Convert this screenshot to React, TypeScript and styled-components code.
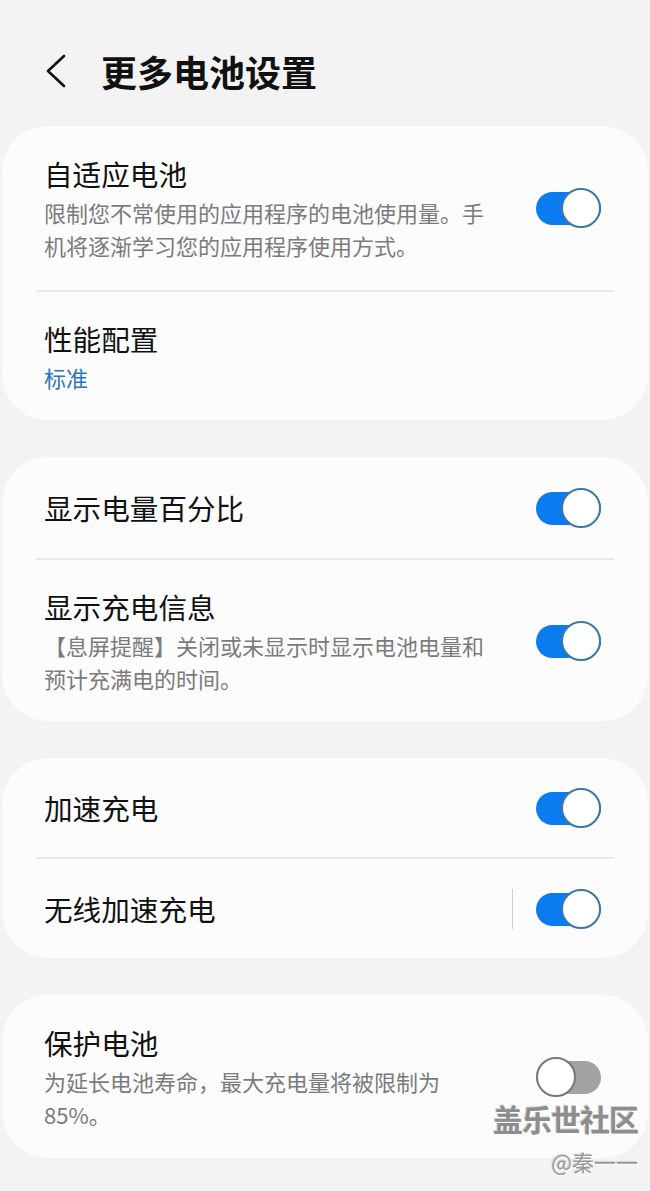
import React from 'react';
import styled, { createGlobalStyle } from 'styled-components';

const GlobalStyle = createGlobalStyle`
  html, body {
    margin: 0;
    padding: 0;
    background: #f3f3f3;
  }
  body {
    font-family: "Noto Sans CJK SC", "Noto Sans", "Liberation Sans", sans-serif;
  }
`;

const Page = styled.div`
  position: relative;
  width: 650px;
  min-height: 1191px;
  background: #f3f3f3;
  overflow: hidden;
`;

const Header = styled.div`
  display: flex;
  align-items: center;
  height: 111px;
  padding: 15px 0 0 42px;
  gap: 33px;
`;

const BackButton = styled.button`
  display: flex;
  align-items: center;
  justify-content: center;
  width: 26px;
  height: 40px;
  padding: 0;
  border: none;
  background: transparent;
`;

const Title = styled.h1`
  margin: 0;
  font-size: 36px;
  font-weight: 700;
  line-height: 48px;
  color: #111;
`;

const Card = styled.section`
  margin: 0 2px 37px 2px;
  background: #fcfcfc;
  border-radius: 46px;
`;

const Row = styled.div<{ $height: number }>`
  display: flex;
  align-items: center;
  min-height: ${p => p.$height}px;
  padding: 0 47px 0 42px;
  box-sizing: border-box;
`;

const Texts = styled.div`
  flex: 1;
  display: flex;
  flex-direction: column;
`;

const ItemTitle = styled.div`
  font-size: 28.6px;
  line-height: 40px;
  color: #111;
`;

const Sub = styled.div<{ $accent?: boolean }>`
  max-width: 452px;
  margin-top: 2px;
  font-size: 22px;
  line-height: 33px;
  color: ${p => (p.$accent ? '#2a78b5' : '#7b7b7b')};
`;

const Divider = styled.div`
  height: 2px;
  margin: 0 34px;
  background: #e9e9e9;
`;

const VSep = styled.div`
  flex: none;
  width: 1px;
  height: 40px;
  margin-right: 23px;
  background: #cfcfcf;
`;

const Toggle = styled.div<{ $on: boolean }>`
  position: relative;
  flex: none;
  width: 65px;
  height: 40px;

  &::before {
    content: '';
    position: absolute;
    left: 0;
    right: 0;
    top: 4px;
    height: 33px;
    border-radius: 17px;
    background: ${p => (p.$on ? '#0b7cf0' : '#a2a2a2')};
  }

  &::after {
    content: '';
    position: absolute;
    top: 0;
    ${p => (p.$on ? 'right: 0;' : 'left: 0;')}
    width: 36px;
    height: 36px;
    border-radius: 50%;
    background: #fff;
    border: 2px solid ${p => (p.$on ? '#3b78a6' : '#777')};
  }
`;

const Watermark = styled.div`
  position: absolute;
  right: 12px;
  bottom: 19px;
  display: flex;
  flex-direction: column;
  align-items: flex-end;
  color: #8d8d8d;
  text-shadow: 1px 1px 0 #fff, -1px -1px 0 #d0d0d0;
`;

const MarkBig = styled.div`
  font-size: 30px;
  font-weight: 700;
  line-height: 40px;
  letter-spacing: -1px;
`;

const MarkSmall = styled.div`
  font-size: 22px;
  line-height: 30px;
  margin-top: 8px;
  color: #999;
`;

function Chevron() {
  return (
    <svg width="24" height="36" viewBox="0 0 24 36" fill="none">
      <path d="M21 3 L5 18 L21 33" stroke="#111" strokeWidth="2.6" strokeLinecap="round" strokeLinejoin="round" />
    </svg>
  );
}

export default function App() {
  return (
    <Page>
      <GlobalStyle />
      <Header>
        <BackButton aria-label="返回">
          <Chevron />
        </BackButton>
        <Title>更多电池设置</Title>
      </Header>

      <Card>
        <Row $height={164}>
          <Texts>
            <ItemTitle>自适应电池</ItemTitle>
            <Sub>限制您不常使用的应用程序的电池使用量。手机将逐渐学习您的应用程序使用方式。</Sub>
          </Texts>
          <Toggle $on />
        </Row>
        <Divider />
        <Row $height={128}>
          <Texts>
            <ItemTitle>性能配置</ItemTitle>
            <Sub $accent>标准</Sub>
          </Texts>
        </Row>
      </Card>

      <Card>
        <Row $height={101}>
          <Texts>
            <ItemTitle>显示电量百分比</ItemTitle>
          </Texts>
          <Toggle $on />
        </Row>
        <Divider />
        <Row $height={161}>
          <Texts>
            <ItemTitle>显示充电信息</ItemTitle>
            <Sub>【息屏提醒】关闭或未显示时显示电池电量和预计充满电的时间。</Sub>
          </Texts>
          <Toggle $on />
        </Row>
      </Card>

      <Card>
        <Row $height={99}>
          <Texts>
            <ItemTitle>加速充电</ItemTitle>
          </Texts>
          <Toggle $on />
        </Row>
        <Divider />
        <Row $height={99}>
          <Texts>
            <ItemTitle>无线加速充电</ItemTitle>
          </Texts>
          <VSep />
          <Toggle $on />
        </Row>
      </Card>

      <Card>
        <Row $height={163}>
          <Texts>
            <ItemTitle>保护电池</ItemTitle>
            <Sub>为延长电池寿命，最大充电量将被限制为85%。</Sub>
          </Texts>
          <Toggle $on={false} />
        </Row>
      </Card>

      <Watermark>
        <MarkBig>盖乐世社区</MarkBig>
        <MarkSmall>@秦一一</MarkSmall>
      </Watermark>
    </Page>
  );
}
